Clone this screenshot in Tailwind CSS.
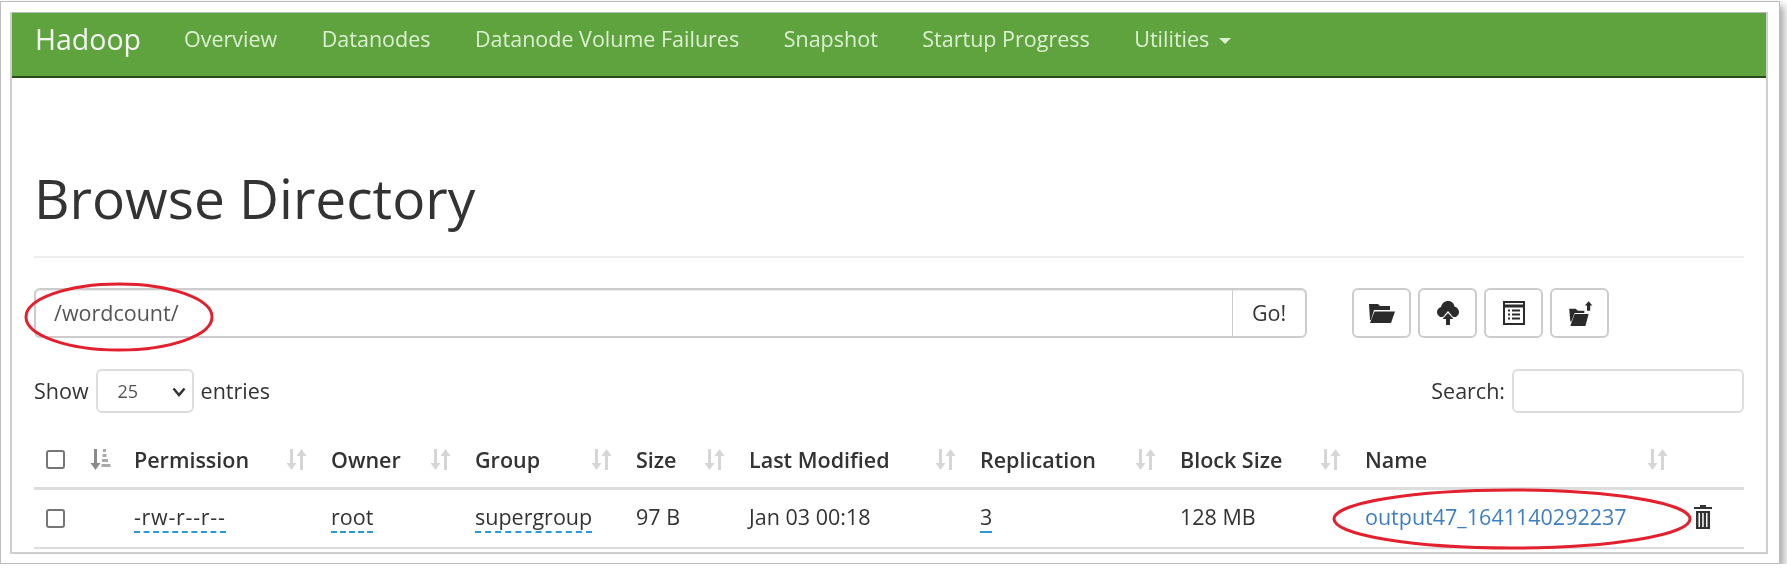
<!DOCTYPE html>
<html lang="en">
<head>
    <meta charset="UTF-8">
    <title>Browsing HDFS</title>
    <script src="https://cdn.jsdelivr.net/npm/@tailwindcss/browser@4"></script>
</head>
<body class="bg-white font-['Open_Sans',sans-serif] text-[#333] overflow-hidden">

    <!-- Screenshot frame -->
    <div class="relative mt-px w-[1780px] h-[563px] bg-white border border-[#bdbdbd] shadow-[4px_5px_8px_rgba(0,0,0,0.35)] pl-[9px] pr-[11px] pt-[10px] pb-[9px] blur-[0.4px]">
        <div class="h-full border-x-2 border-b-2 border-[#cfcfcf]">

            <!-- Navbar -->
            <nav class="h-[66px] bg-[#5fa33e] border-t border-[#bbb] border-b-2 border-b-[#2a4a1e] flex items-start pl-[23px] pt-[10px] text-[21.5px] text-[#dcf0d2]">
                <a class="text-[28.5px] leading-[32px] text-[#f4f4f4] w-[149px]">Hadoop</a>
                <a class="leading-[32px] mr-[44.5px]">Overview</a>
                <a class="leading-[32px] mr-[44.5px]">Datanodes</a>
                <a class="leading-[32px] mr-[44.5px]">Datanode Volume Failures</a>
                <a class="leading-[32px] mr-[44.5px]">Snapshot</a>
                <a class="leading-[32px] mr-[44.5px]">Startup Progress</a>
                <a class="leading-[32px] flex items-center gap-[10px]">Utilities <span class="mt-[3px] border-x-[6px] border-x-transparent border-t-[6px] border-t-[#dcf0d2]"></span></a>
            </nav>

            <div class="px-[22px]">
                <!-- Heading -->
                <div class="pt-[90px] pb-[28px] border-b-2 border-[#eee]">
                    <h1 class="text-[55px] leading-[60px]">Browse Directory</h1>
                </div>

                <!-- Path bar -->
                <div class="flex mt-[30px] h-[50px] text-[21.5px]">
                    <div class="flex flex-1 max-w-[1273px] border-2 border-[#ccc] rounded-md shadow-[inset_0_1px_1px_rgba(0,0,0,0.08)]">
                        <input class="flex-1 min-w-0 pl-[18px] outline-none text-[#555] bg-transparent" value="/wordcount/">
                        <button class="w-[73px] border-l border-[#ccc] text-[#333]">Go!</button>
                    </div>
                    <div class="flex gap-[7px] ml-[45px]">
                        <button class="w-[59px] border-2 border-[#ccc] rounded-md flex items-center justify-center">
                            <svg width="28" height="22" viewBox="0 0 28 22" fill="#2b2b2b"><path d="M1 2h9l2 2h10v4H6L3 18H2z"/><path d="M6.500 9.500H27L23 21H2z"/></svg>
                        </button>
                        <button class="w-[59px] border-2 border-[#ccc] rounded-md flex items-center justify-center">
                            <svg width="24" height="26" viewBox="0 0 24 26" fill="#2b2b2b"><path d="M12 1c4 0 6 2.500 6.500 5.500C21 7 23 9.500 23 12c0 2-1 3.500-3 5h-3l-5-6-5 6H4c-2-1.500-3-3-3-5 0-2.500 2-4.500 4-5C6 3 9 1 12 1z"/><path d="M12 13l5.500 6H14v6h-4v-6H6.500z"/></svg>
                        </button>
                        <button class="w-[59px] border-2 border-[#ccc] rounded-md flex items-center justify-center">
                            <svg width="22" height="24" viewBox="0 0 22 24"><rect x="1" y="1" width="20" height="22" fill="#fff" stroke="#2b2b2b" stroke-width="2"/><path d="M1 5h20" stroke="#2b2b2b" stroke-width="3"/><path d="M5 9.500h2M9 9.500h8M5 13.500h2M9 13.500h8M5 17.500h2M9 17.500h8" stroke="#2b2b2b" stroke-width="2"/></svg>
                        </button>
                        <button class="w-[59px] border-2 border-[#ccc] rounded-md flex items-center justify-center">
                            <svg width="26" height="28" viewBox="0 0 24 26" fill="#2b2b2b"><path d="M2 9h6l2 2h6v2H7l-3 8H3z"/><path d="M7 14h13l-3 11H3z"/><path d="M20 2l3.500 4H21.500v5h-3V6H16.500z"/></svg>
                        </button>
                    </div>
                </div>

                <!-- Length + search -->
                <div class="flex items-center justify-between mt-[31px] h-[44px] text-[21.5px] text-[#333]">
                    <div class="flex items-center">
                        <span>Show</span>
                        <div class="relative w-[98px] h-[44px] mx-[7px] border-2 border-[#ddd] rounded-md flex items-center pl-[20px] text-[18px] text-[#555]">
                            25
                            <svg class="absolute right-[6px] top-[16px]" width="14" height="10" viewBox="0 0 14 10" fill="none" stroke="#333" stroke-width="2.500"><path d="M1.500 1.500L7 8l5.500-6.500"/></svg>
                        </div>
                        <span>entries</span>
                    </div>
                    <div class="flex items-center gap-[7px]">
                        <span>Search:</span>
                        <input class="w-[232px] h-[44px] border-2 border-[#ddd] rounded-md outline-none">
                    </div>
                </div>

                <!-- Table -->
                <table class="table-fixed w-[1710px] mt-[24px] text-[21.5px]">
                    <colgroup>
                        <col class="w-[44px]"><col class="w-[44px]"><col class="w-[197px]"><col class="w-[144px]"><col class="w-[161px]"><col class="w-[113px]"><col class="w-[231px]"><col class="w-[200px]"><col class="w-[185px]"><col class="w-[327px]"><col class="w-[64px]">
                    </colgroup>
                    <thead>
                        <tr class="border-b-[3px] border-[#ddd] h-[51px] font-semibold text-left">
                            <th class="pl-[12px] pb-[4px] font-normal"><span class="block w-[19px] h-[19px] border-2 border-[#767676] rounded-[3px]"></span></th>
                            <th class="pl-[12px] pb-[4px] font-normal">
                                <svg width="21" height="21" viewBox="0 0 21 21" fill="#8a8a8a"><path d="M4 0h3v14h3.500l-5 7-5-7H4z"/><path d="M13 0h3v3h-3zM12.500 5h4v3h-4zM12 10h6v3h-6zM11.500 15h9v3h-9z" fill="#aaa"/></svg>
                            </th>
                            <th class="px-[12px] pb-[4px] font-semibold"><div class="flex justify-between items-center">Permission <svg width="21" height="21" viewBox="0 0 21 21" fill="#d6d6d6"><path d="M4 0h3v14h3.500l-5 7-5-7H4z"/><path d="M14 21h3V7h3.500l-5-7-5 7H14z"/></svg></div></th>
                            <th class="px-[12px] pb-[4px] font-semibold"><div class="flex justify-between items-center">Owner <svg width="21" height="21" viewBox="0 0 21 21" fill="#d6d6d6"><path d="M4 0h3v14h3.500l-5 7-5-7H4z"/><path d="M14 21h3V7h3.500l-5-7-5 7H14z"/></svg></div></th>
                            <th class="px-[12px] pb-[4px] font-semibold"><div class="flex justify-between items-center">Group <svg width="21" height="21" viewBox="0 0 21 21" fill="#d6d6d6"><path d="M4 0h3v14h3.500l-5 7-5-7H4z"/><path d="M14 21h3V7h3.500l-5-7-5 7H14z"/></svg></div></th>
                            <th class="px-[12px] pb-[4px] font-semibold"><div class="flex justify-between items-center">Size <svg width="21" height="21" viewBox="0 0 21 21" fill="#d6d6d6"><path d="M4 0h3v14h3.500l-5 7-5-7H4z"/><path d="M14 21h3V7h3.500l-5-7-5 7H14z"/></svg></div></th>
                            <th class="px-[12px] pb-[4px] font-semibold"><div class="flex justify-between items-center">Last Modified <svg width="21" height="21" viewBox="0 0 21 21" fill="#d6d6d6"><path d="M4 0h3v14h3.500l-5 7-5-7H4z"/><path d="M14 21h3V7h3.500l-5-7-5 7H14z"/></svg></div></th>
                            <th class="px-[12px] pb-[4px] font-semibold"><div class="flex justify-between items-center">Replication <svg width="21" height="21" viewBox="0 0 21 21" fill="#d6d6d6"><path d="M4 0h3v14h3.500l-5 7-5-7H4z"/><path d="M14 21h3V7h3.500l-5-7-5 7H14z"/></svg></div></th>
                            <th class="px-[12px] pb-[4px] font-semibold"><div class="flex justify-between items-center">Block Size <svg width="21" height="21" viewBox="0 0 21 21" fill="#d6d6d6"><path d="M4 0h3v14h3.500l-5 7-5-7H4z"/><path d="M14 21h3V7h3.500l-5-7-5 7H14z"/></svg></div></th>
                            <th class="px-[12px] pb-[4px] font-semibold"><div class="flex justify-between items-center">Name <svg width="21" height="21" viewBox="0 0 21 21" fill="#d6d6d6"><path d="M4 0h3v14h3.500l-5 7-5-7H4z"/><path d="M14 21h3V7h3.500l-5-7-5 7H14z"/></svg></div></th>
                            <th></th>
                        </tr>
                    </thead>
                    <tbody>
                        <tr class="border-b-2 border-[#ddd] h-[60px]">
                            <td class="pl-[12px]"><span class="block w-[19px] h-[19px] border-2 border-[#767676] rounded-[3px]"></span></td>
                            <td></td>
                            <td class="px-[12px] pb-[2px]"><span class="border-b-2 border-dashed border-[#2a9ad6] tracking-[0.7px]">-rw-r--r--</span></td>
                            <td class="px-[12px] pb-[2px]"><span class="border-b-2 border-dashed border-[#2a9ad6]">root</span></td>
                            <td class="px-[12px] pb-[2px]"><span class="border-b-2 border-dashed border-[#2a9ad6]">supergroup</span></td>
                            <td class="px-[12px] pb-[2px]">97 B</td>
                            <td class="px-[12px] pb-[2px]">Jan 03 00:18</td>
                            <td class="px-[12px] pb-[2px]"><span class="border-b-2 border-dashed border-[#2a9ad6]">3</span></td>
                            <td class="px-[12px] pb-[2px]">128 MB</td>
                            <td class="px-[12px] pb-[2px] text-[#3f7fbf] whitespace-nowrap">output47_1641140292237</td>
                            <td class="pl-[13px] pb-[2px]">
                                <svg width="20" height="24" viewBox="0 0 20 24" fill="#333"><path d="M7 0h6v2h6v2H1V2h6z"/><path d="M3 6h14v18H3zM5.500 8v14h1.500V8zM9.200 8v14h1.500V8zM13 8v14h1.500V8z" fill-rule="evenodd"/></svg>
                            </td>
                        </tr>
                    </tbody>
                </table>
            </div>
        </div>

        <!-- Red annotation ellipses -->
        <svg class="absolute left-0 top-0 pointer-events-none" width="1780" height="563" fill="none" stroke="#e3202e" stroke-width="3">
            <ellipse cx="118" cy="315" rx="93" ry="33"/>
            <ellipse cx="1511" cy="517" rx="178" ry="29"/>
        </svg>
    </div>

</body>
</html>
